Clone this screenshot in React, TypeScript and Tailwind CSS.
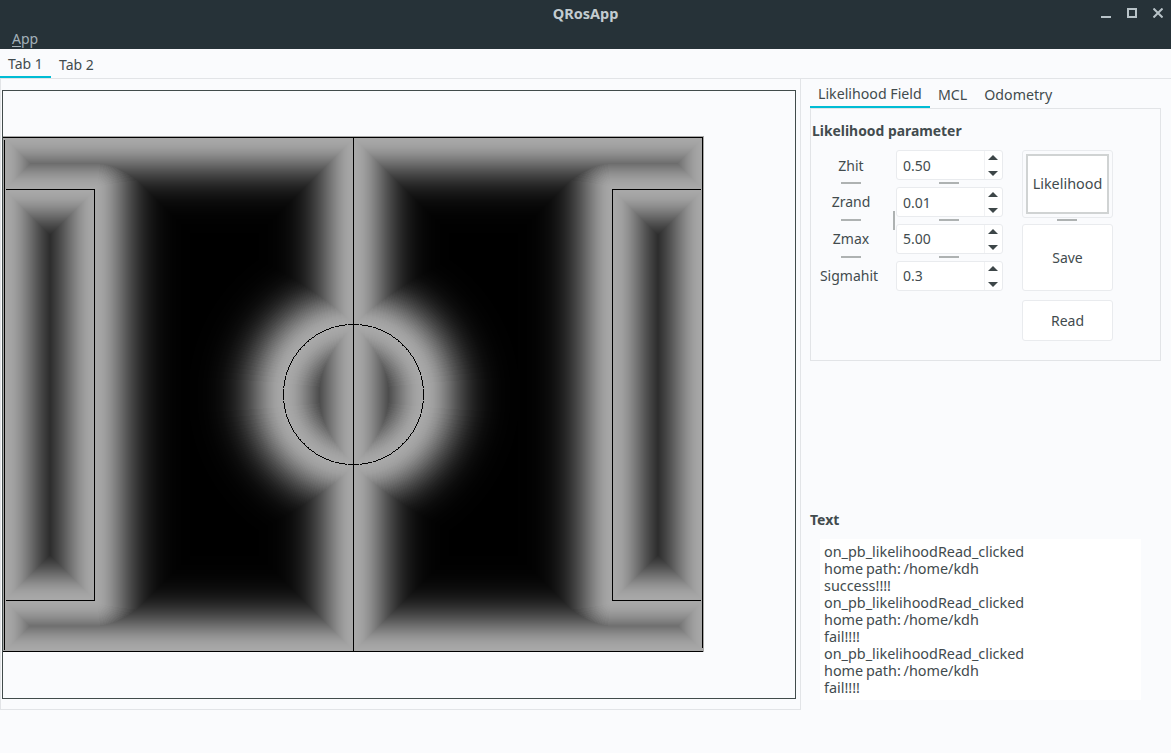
import { useEffect, useRef } from 'react'

const FIELD_W = 701
const FIELD_H = 516

// Everything below is in canvas coordinates (page x - 3, page y - 136)
type Segment = [number, number, number, number]

const walls: Segment[] = [
  [1, 1.5, 700, 1.5],
  [1, 514.5, 700, 514.5],
  [1.5, 1, 1.5, 514],
  [699.5, 1, 699.5, 514],
  [350.5, 1, 350.5, 514],
  [2, 53, 91.5, 53],
  [91.5, 53, 91.5, 464],
  [2, 464, 91.5, 464],
  [609.5, 53, 699, 53],
  [609.5, 53, 609.5, 464],
  [609.5, 464, 699, 464],
]

const circle = { x: 350.5, y: 258.5, r: 70 }

function distToSegment(px: number, py: number, [x1, y1, x2, y2]: Segment) {
  const cx = Math.max(x1, Math.min(x2, px))
  const cy = Math.max(y1, Math.min(y2, py))
  return Math.hypot(px - cx, py - cy)
}

function drawField(canvas: HTMLCanvasElement) {
  const ctx = canvas.getContext('2d')
  if (!ctx) return
  const image = ctx.createImageData(FIELD_W, FIELD_H)

  for (let y = 0; y < FIELD_H; y++) {
    for (let x = 0; x < FIELD_W; x++) {
      let d = Math.abs(Math.hypot(x - circle.x, y - circle.y) - circle.r)
      for (const wall of walls) d = Math.min(d, distToSegment(x, y, wall))
      // stepped distance gives the faint banding of the original map
      const stepped = Math.round(d)
      const v = Math.round(168 * Math.exp(-(stepped * stepped) / (2 * 28 * 28)))
      const i = (y * FIELD_W + x) * 4
      image.data[i] = v
      image.data[i + 1] = v
      image.data[i + 2] = v
      image.data[i + 3] = 255
    }
  }
  ctx.putImageData(image, 0, 0)

  ctx.fillStyle = '#000'
  ctx.fillRect(0, 1, 700, 1)
  ctx.fillRect(0, 515, 700, 1)
  ctx.fillRect(1, 4, 1, 510)
  ctx.fillRect(699, 1, 1, 511)
  ctx.fillRect(350, 1, 1, 514)
  ctx.fillRect(3, 53, 89, 1)
  ctx.fillRect(91, 53, 1, 412)
  ctx.fillRect(3, 464, 89, 1)
  ctx.fillRect(609, 53, 89, 1)
  ctx.fillRect(609, 53, 1, 412)
  ctx.fillRect(609, 464, 89, 1)

  // coarse angle step leaves the small gaps of the original circle
  for (let a = 0; a < 360; a += 0.9) {
    const rad = (a * Math.PI) / 180
    ctx.fillRect(
      Math.round(circle.x + circle.r * Math.cos(rad) - 0.5),
      Math.round(circle.y + circle.r * Math.sin(rad) - 0.5),
      1,
      1,
    )
  }
}

function LikelihoodMap() {
  const ref = useRef<HTMLCanvasElement>(null)

  useEffect(() => {
    if (ref.current) drawField(ref.current)
  }, [])

  return <canvas ref={ref} width={FIELD_W} height={FIELD_H} className="block" />
}

function Handle({ className }: { className: string }) {
  return <div className={`absolute bg-[#aeb2b2] ${className}`} />
}

function Arrow({ up }: { up?: boolean }) {
  return (
    <svg width="10" height="5" viewBox="0 0 10 5" className="block">
      <polygon points={up ? '5,0 10,5 0,5' : '0,0 10,0 5,5'} fill="#3d4648" />
    </svg>
  )
}

interface SpinRowProps {
  label: string
  value: string
  labelClass: string
  valueClass?: string
  last?: boolean
}

function SpinRow({ label, value, labelClass, valueClass, last }: SpinRowProps) {
  return (
    <div className="relative flex h-[30px] items-center">
      <div className={`w-[84px] text-center ${labelClass}`}>{label}</div>
      <div className="flex h-[30px] w-[107px] rounded-[3px] border border-[#e9ebee] bg-white">
        <div className={`flex flex-1 items-center pl-[6px] ${valueClass ?? ''}`}>{value}</div>
        <div className="flex w-[18px] flex-col items-start justify-center gap-[11px] border-l border-[#f1f2f4] pl-[3px]">
          <Arrow up />
          <Arrow />
        </div>
      </div>
      {!last && <Handle className="bottom-[-4px] left-[29px] h-[2px] w-[20px]" />}
      {!last && <Handle className="bottom-[-4px] left-[127px] h-[2px] w-[20px]" />}
    </div>
  )
}

const logLines = [
  'on_pb_likelihoodRead_clicked',
  'home path: /home/kdh',
  'success!!!!',
  'on_pb_likelihoodRead_clicked',
  'home path: /home/kdh',
  'fail!!!!',
  'on_pb_likelihoodRead_clicked',
  'home path: /home/kdh',
  'fail!!!!',
]

export default function App() {
  return (
    <div className="flex h-[753px] w-[1171px] flex-col overflow-hidden bg-[#fafbfd] font-['Noto_Sans',sans-serif] text-[14px] text-[#424b4e]">
      {/* Title bar + menu */}
      <div className="h-[49px] shrink-0 bg-[#263238]">
        <div className="relative flex h-[27px] items-center justify-center text-[14.5px] font-bold text-[#c3ccd0]">
          QRosApp
          <div className="absolute right-[8px] top-[8px] flex items-start gap-[16px]">
            <svg width="10" height="10" viewBox="0 0 10 10">
              <rect x="0" y="8" width="10" height="2" fill="#b8c3c8" />
            </svg>
            <svg width="10" height="10" viewBox="0 0 10 10">
              <rect x="1" y="1" width="8" height="8" fill="none" stroke="#b8c3c8" strokeWidth="2" />
            </svg>
            <svg width="10" height="10" viewBox="0 0 10 10">
              <path d="M0.5 0.5L9.5 9.5M9.5 0.5L0.5 9.5" stroke="#b8c3c8" strokeWidth="2" />
            </svg>
          </div>
        </div>
        <div className="pl-[12px] pt-[1px] text-[#a3b1b8]">
          <span className="underline underline-offset-2">A</span>pp
        </div>
      </div>

      {/* Main tabs */}
      <div className="flex h-[30px] shrink-0 border-b border-[#e2e4e7]">
        <div className="h-[29px] w-[51px] border-b-2 border-[#00bcd4] pl-[8px] pt-[4px]">Tab 1</div>
        <div className="pl-[8px] pt-[5px]">Tab 2</div>
      </div>

      <div className="flex flex-1 items-start">
        {/* Left pane */}
        <div className="h-[631px] w-[801px] shrink-0 border-x border-b border-[#e2e4e7] pl-[1px] pt-[11px]">
          <div className="h-[609px] w-[794px] border border-[#414b4b] pt-[45px]">
            <LikelihoodMap />
          </div>
        </div>

        {/* Right column */}
        <div className="ml-[9px] flex w-[351px] flex-col">
          <div className="flex h-[29px] items-end text-[14.2px]">
            <div className="h-[28px] w-[120px] border-b-2 border-[#00bcd4] pl-[8px] pt-[3px]">Likelihood Field</div>
            <div className="pb-[3px] pl-[8px]">MCL</div>
            <div className="pb-[3px] pl-[17px]">Odometry</div>
          </div>

          <div className="h-[253px] border border-[#e2e4e7]">
            <div className="pt-[12px] pl-[1px] text-[13.9px] font-bold leading-[20px]">Likelihood parameter</div>
            <div className="mt-[9px] flex pl-[1px]">
              <div className="relative flex flex-col gap-[7px]">
                <SpinRow label="Zhit" value="0.50" labelClass="pr-[6px]" />
                <SpinRow label="Zrand" value="0.01" labelClass="-translate-y-px pr-[6px]" />
                <SpinRow label="Zmax" value="5.00" labelClass="-translate-y-px pr-[6px]" valueClass="-translate-y-px" />
                <SpinRow label="Sigmahit" value="0.3" labelClass="-translate-y-px pr-[10px]" valueClass="-translate-y-px" last />
                <Handle className="left-[81px] top-[61px] h-[19px] w-[2px]" />
              </div>
              <div className="ml-[19px] flex w-[91px] flex-col">
                <div className="relative h-[68px] rounded-[3px] border border-[#e9ebee] p-[3px]">
                  <div className="flex h-full items-center justify-center border-2 border-[#d0d3d3] bg-white text-[14.4px]">Likelihood</div>
                  <Handle className="bottom-[-4px] left-[34px] h-[2px] w-[20px]" />
                </div>
                <div className="mt-[6px] flex h-[67px] items-center justify-center rounded-[3px] border border-[#e9ebee] bg-white">Save</div>
                <div className="mt-[9px] flex h-[41px] items-center justify-center rounded-[3px] border border-[#e9ebee] bg-white">Read</div>
              </div>
            </div>
          </div>

          <div className="mt-[149px] font-bold leading-[20px]">Text</div>
          <div className="ml-[10px] mt-[9px] h-[161px] w-[321px] bg-white pl-[4px] pt-[4px] text-[14.4px] leading-[17px] [word-spacing:-1px]">
            {logLines.map((line, i) => (
              <div key={i}>{line}</div>
            ))}
          </div>
        </div>
      </div>
    </div>
  )
}
